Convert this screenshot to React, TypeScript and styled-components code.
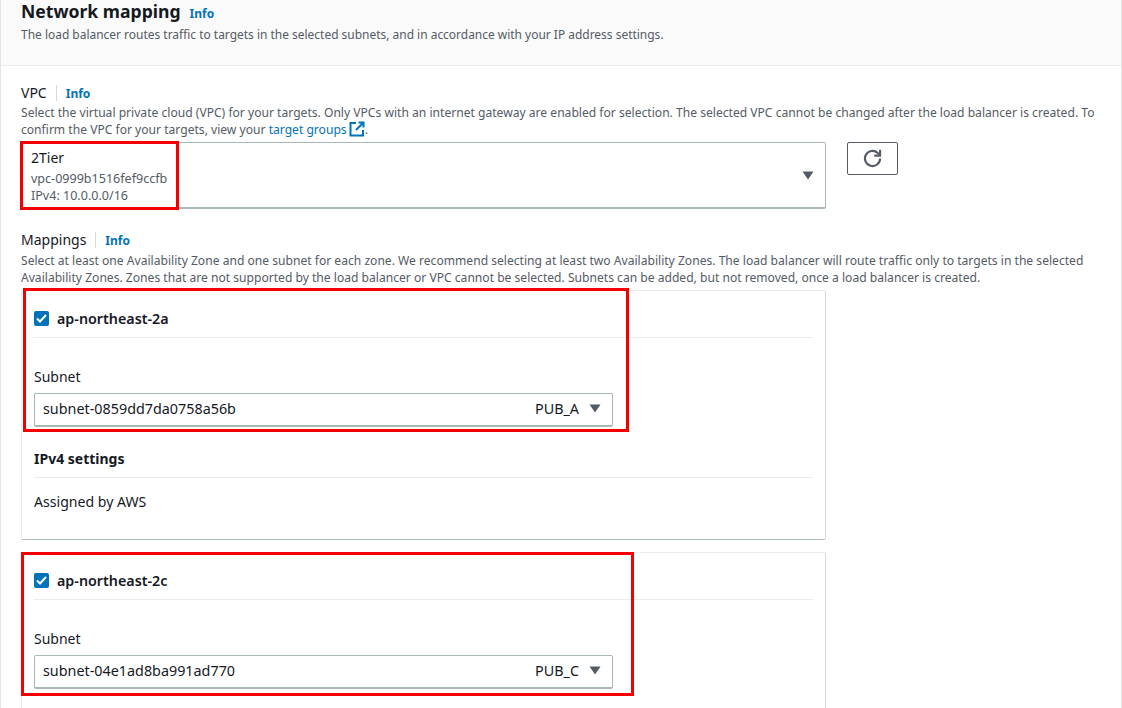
import React from 'react'
import styled, { createGlobalStyle } from 'styled-components'

const Global = createGlobalStyle`
	html, body {
		margin: 0;
		padding: 0;
		background: #fff;
		overflow: hidden;
	}
	body {
		font-family: 'Noto Sans', 'Open Sans', sans-serif;
		color: #16191f;
	}
`

const Page = styled.div`
	position: relative;
	width: 1122px;
	height: 708px;
	box-sizing: border-box;
	overflow: hidden;
	border-left: 1px solid #e4e6e6;
	border-right: 1px solid #e4e6e6;
`

const Header = styled.header`
	height: 66px;
	box-sizing: border-box;
	padding: 0 20px;
	background: #fafafa;
	border-bottom: 1px solid #eaeded;
`

const TitleRow = styled.div`
	display: flex;
	align-items: baseline;
	gap: 9px;
	height: 26px;
	line-height: 22px;
`

const Title = styled.h2`
	margin: 0;
	font-size: 17.6px;
	font-weight: 700;
	color: #16191f;
`

const InfoLink = styled.a`
	font-size: 12px;
	font-weight: 700;
	color: #0073bb;
`

const Muted = styled.p`
	margin: 0;
	font-size: 11.96px;
	line-height: 17px;
	color: #545b64;
`

const VpcHint = styled(Muted)`
	margin-top: 3px;
	font-size: 12.1px;
	line-height: 16px;
`

const MappingHint = styled(Muted)`
	margin-top: 3px;
	font-size: 12.1px;
	line-height: 17px;
`

const Body = styled.div`
	padding: 18px 20px 0;
`

const LabelRow = styled.div`
	display: flex;
	align-items: center;
	height: 18px;
`

const Label = styled.span`
	font-size: 14px;
	line-height: 18px;
	color: #16191f;
`

const Divider = styled.span`
	height: 16px;
	margin: 0 9px;
	border-left: 1px solid #d5dbdb;
`

const TextLink = styled.a`
	color: #0073bb;
`

const External = styled.svg`
	width: 16px;
	height: 16px;
	margin-left: 2px;
	vertical-align: -3px;
`

const VpcRow = styled.div`
	display: flex;
	align-items: flex-start;
	gap: 21px;
	margin-top: 4px;
`

const VpcSelect = styled.div`
	position: relative;
	width: 805px;
	height: 67px;
	box-sizing: border-box;
	padding: 5px 9px;
	border: 1px solid #aab7b8;
	border-bottom-width: 2px;
	border-radius: 2px;
`

const VpcName = styled.div`
	font-size: 14px;
	line-height: 19px;
	color: #16191f;
`

const VpcMeta = styled.div`
	margin-top: 3px;
	font-size: 12.55px;
	line-height: 17px;
	color: #545b64;
`

const Caret = styled.svg`
	width: 12px;
	height: 9px;
	fill: #545b64;
`

const VpcCaret = styled(Caret)`
	position: absolute;
	right: 11px;
	top: 28px;
`

const RefreshButton = styled.button`
	display: flex;
	align-items: center;
	justify-content: center;
	width: 51px;
	height: 33px;
	padding: 0;
	background: #fff;
	border: 1px solid #545b64;
	border-radius: 2px;
`

const Mappings = styled.section`
	margin-top: 22px;
`

const Cards = styled.div`
	display: flex;
	flex-direction: column;
	gap: 12px;
	margin-top: 4px;
`

const Card = styled.div`
	width: 805px;
	box-sizing: border-box;
	padding: 0 12px 0;
	border: 1px solid #eaeded;
	border-bottom: 1px solid #aab7b8;
	border-right-color: #d5dbdb;
	border-radius: 2px;
	background: #fff;
`

// the last card runs on past the bottom of the window
const OpenCard = styled(Card)`
	padding-bottom: 60px;
`

const ZoneRow = styled.label`
	display: flex;
	align-items: center;
	gap: 8px;
	height: 47px;
	box-sizing: border-box;
	padding-top: 8px;
	border-bottom: 1px solid #eaeded;
`

const Check = styled.span`
	display: flex;
	align-items: center;
	justify-content: center;
	width: 15px;
	height: 15px;
	border-radius: 2px;
	background: #0073bb;
`

const ZoneName = styled.span`
	font-size: 14.3px;
	font-weight: 600;
	color: #16191f;
`

const FieldLabel = styled.div`
	margin-top: 29px;
	font-size: 14px;
	line-height: 19px;
	color: #16191f;
`

const SubnetSelect = styled.div`
	display: flex;
	align-items: center;
	width: 579px;
	height: 34px;
	margin-top: 7px;
	box-sizing: border-box;
	padding: 0 11px 2px 8px;
	border: 1px solid #aab7b8;
	border-bottom-width: 2px;
	border-radius: 2px;
	font-size: 14.35px;
	color: #16191f;
`

const SubnetId = styled.span`
	flex: 1;
`

const SubnetName = styled.span`
	margin-right: 10px;
`

const SectionTitle = styled.div`
	margin-top: 22px;
	padding-bottom: 9px;
	border-bottom: 1px solid #eaeded;
	font-size: 14px;
	font-weight: 700;
	line-height: 19px;
`

const Assigned = styled.div`
	height: 61px;
	padding-top: 14px;
	box-sizing: border-box;
	font-size: 14.1px;
	line-height: 19px;
`

// red marks drawn over the screenshot
const Highlight = styled.div<{ $x: number; $y: number; $w: number; $h: number }>`
	position: absolute;
	left: ${(p) => p.$x}px;
	top: ${(p) => p.$y}px;
	width: ${(p) => p.$w}px;
	height: ${(p) => p.$h}px;
	box-sizing: border-box;
	border: 3px solid #f40000;
	pointer-events: none;
`

const CaretIcon = () => <path d="M0.5 0.5h11L6 8.5z" />

function ZoneFields({
	zone,
	subnet,
	name,
}: {
	zone: string
	subnet: string
	name: string
}) {
	return (
		<>
			<ZoneRow>
				<Check>
					<svg width="11" height="9" viewBox="0 0 11 9" fill="none">
						<path d="M1 4.5L4 7.5L10 1" stroke="#fff" strokeWidth="2" />
					</svg>
				</Check>
				<ZoneName>{zone}</ZoneName>
			</ZoneRow>
			<FieldLabel>Subnet</FieldLabel>
			<SubnetSelect>
				<SubnetId>{subnet}</SubnetId>
				<SubnetName>{name}</SubnetName>
				<Caret viewBox="0 0 12 9">
					<CaretIcon />
				</Caret>
			</SubnetSelect>
		</>
	)
}

export default function App() {
	return (
		<Page>
			<Global />
			<Header>
				<TitleRow>
					<Title>Network mapping</Title>
					<InfoLink>Info</InfoLink>
				</TitleRow>
				<Muted>
					The load balancer routes traffic to targets in the selected subnets, and in accordance with your IP address settings.
				</Muted>
			</Header>
			<Body>
				<LabelRow>
					<Label>VPC</Label>
					<Divider />
					<InfoLink>Info</InfoLink>
				</LabelRow>
				<VpcHint>
					Select the virtual private cloud (VPC) for your targets. Only VPCs with an internet gateway are enabled for selection. The selected VPC cannot be changed after the load balancer is created. To confirm the VPC for your targets, view your <TextLink>target groups</TextLink>
					<External viewBox="0 0 16 16" fill="none" stroke="#0073bb" strokeWidth="2">
						<path d="M7 2H1.500v12.500H14V9M9.500 1.500H14.500V6.500M14 2L7 9" />
					</External>.
				</VpcHint>
				<VpcRow>
					<VpcSelect>
						<VpcName>2Tier</VpcName>
						<VpcMeta>
							vpc-0999b1516fef9ccfb
							<br />
							IPv4: 10.0.0.0/16
						</VpcMeta>
						<VpcCaret viewBox="0 0 12 9">
							<CaretIcon />
						</VpcCaret>
					</VpcSelect>
					<RefreshButton>
						<svg width="21" height="21" viewBox="0 0 18 18" fill="none" stroke="#545b64" strokeWidth="1.800">
							<path d="M15.500 9a6.500 6.500 0 1 1-2-4.700L15.500 6" />
							<path d="M15.500 1.500V6.500H10.500" />
						</svg>
					</RefreshButton>
				</VpcRow>
				<Mappings>
					<LabelRow>
						<Label>Mappings</Label>
						<Divider />
						<InfoLink>Info</InfoLink>
					</LabelRow>
					<MappingHint>
						Select at least one Availability Zone and one subnet for each zone. We recommend selecting at least two Availability Zones. The load balancer will route traffic only to targets in the selected Availability Zones. Zones that are not supported by the load balancer or VPC cannot be selected. Subnets can be added, but not removed, once a load balancer is created.
					</MappingHint>
					<Cards>
						<Card>
							<ZoneFields zone="ap-northeast-2a" subnet="subnet-0859dd7da0758a56b" name="PUB_A" />
							<SectionTitle>IPv4 settings</SectionTitle>
							<Assigned>Assigned by AWS</Assigned>
						</Card>
						<OpenCard>
							<ZoneFields zone="ap-northeast-2c" subnet="subnet-04e1ad8ba991ad770" name="PUB_C" />
						</OpenCard>
					</Cards>
				</Mappings>
			</Body>
			<Highlight $x={19} $y={141} $w={159} $h={69} />
			<Highlight $x={22} $y={288} $w={606} $h={144} />
			<Highlight $x={20} $y={552} $w={613} $h={144} />
		</Page>
	)
}
